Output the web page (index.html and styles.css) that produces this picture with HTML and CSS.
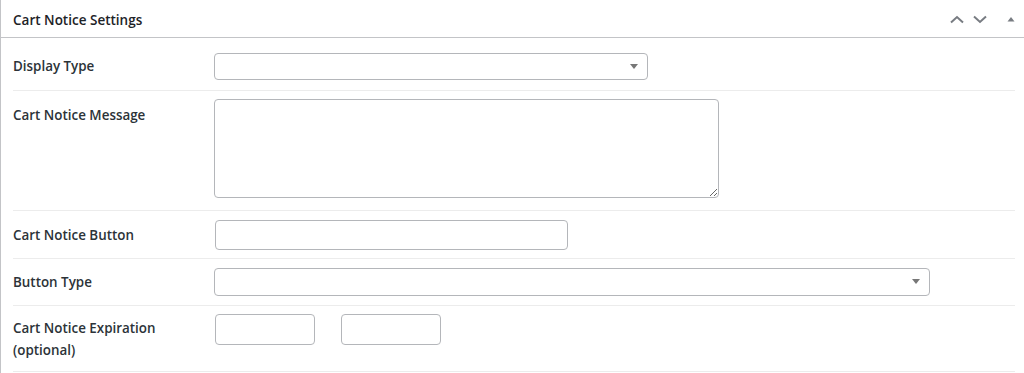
FILE: index.html
```html
<!DOCTYPE html>
<html>
<head>
<meta charset="utf-8">
<link rel="stylesheet" href="styles.css">
</head>
<body>
<div class="panel">
  <div class="panel-header">
    <h2 class="panel-title">Cart Notice Settings</h2>
    <div class="panel-actions">
      <svg class="act" width="16" height="10" viewBox="0 0 16 10"><polyline points="2,8.5 8,3 14,8.5" fill="none" stroke="#787c82" stroke-width="2"/></svg>
      <svg class="act" width="16" height="10" viewBox="0 0 16 10"><polyline points="2,2.5 8,8 14,2.5" fill="none" stroke="#787c82" stroke-width="2"/></svg>
      <svg class="act tri" width="10" height="8" viewBox="0 0 10 8"><polygon points="1.5,6.5 5,2 8.5,6.5" fill="#787c82"/></svg>
    </div>
  </div>
  <div class="panel-body">
    <div class="row r1">
      <label class="lbl">Display Type</label>
      <div class="field"><div class="select-wrap w434"><select class="sel"></select></div></div>
    </div>
    <div class="row r2">
      <label class="lbl">Cart Notice Message</label>
      <div class="field"><textarea class="ta"></textarea></div>
    </div>
    <div class="row r3">
      <label class="lbl">Cart Notice Button</label>
      <div class="field"><input class="inp w353" type="text"></div>
    </div>
    <div class="row r4">
      <label class="lbl">Button Type</label>
      <div class="field"><div class="select-wrap w716"><select class="sel"></select></div></div>
    </div>
    <div class="row r5">
      <label class="lbl">Cart Notice Expiration<br>(optional)</label>
      <div class="field pair"><input class="inp small" type="text"><input class="inp small" type="text"></div>
    </div>
  </div>
</div>
</body>
</html>
```
FILE: styles.css
```css
* { box-sizing: border-box; }
html, body { margin: 0; padding: 0; background: #fff; }
body { font-family: "Open Sans", "Noto Sans", sans-serif; color: #1d2327; }
.panel {
  border-left: 1px solid #c3c4c7;
  height: 373px;
}
.panel-header {
  height: 38px;
  border-bottom: 1px solid #c3c4c7;
  display: flex;
  align-items: center;
  justify-content: space-between;
  padding-left: 12px;
  padding-right: 8px;
}
.panel-title {
  margin: 0;
  font-size: 13.5px;
  font-weight: 600;
  color: #1d2327;
  position: relative;
  top: 1px;
}
.panel-actions { display: flex; align-items: center; }
.act { display: block; margin-left: 7px; }
.act.tri { margin-left: 18px; }
.panel-body { padding: 0 9px 0 12px; }
.row {
  display: grid;
  grid-template-columns: 201px 1fr;
  border-bottom: 1px solid #ececec;
}
.lbl {
  font-size: 13.4px;
  font-weight: 600;
  line-height: 22px;
  color: #2c3338;
}
.r1 { padding: 15px 0 10px; }
.r1 .lbl { padding-top: 2px; }
.r2 { padding: 8px 0 12px; }
.r2 .lbl { padding-top: 5px; }
.r3 { padding: 9px 0 8px; }
.r3 .lbl { padding-top: 4px; }
.r4 { padding: 9px 0 9px; }
.r4 .lbl { padding-top: 3px; }
.r5 { padding: 8px 0 10px; }
.r5 .lbl { padding-top: 3px; }
.field { display: flex; }
.select-wrap { position: relative; }
.select-wrap::after {
  content: "";
  position: absolute;
  right: 10px;
  top: 11px;
  border-left: 4px solid transparent;
  border-right: 4px solid transparent;
  border-top: 5px solid #777;
}
.w434 { width: 434px; }
.w716 { width: 716px; }
.sel {
  -webkit-appearance: none;
  appearance: none;
  display: block;
  width: 100%;
  height: 27px;
  margin: 0;
  border: 1px solid #b4b6ba;
  border-radius: 4px;
  background: #fff;
  font: inherit;
}
.r4 .sel { height: 28px; }
.ta {
  display: block;
  width: 505px;
  height: 99px;
  margin: 0;
  border: 1px solid #b4b6ba;
  border-radius: 4px;
  background: #fff;
  font: inherit;
  resize: both;
}
.inp {
  display: block;
  height: 30px;
  margin: 0;
  border: 1px solid #b4b6ba;
  border-radius: 4px;
  background: #fff;
  font: inherit;
  padding: 0 8px;
}
.w353 { width: 353px; margin-left: 1px; }
.pair { gap: 26px; padding-left: 1px; }
.small { width: 100px; height: 31px; }
```
